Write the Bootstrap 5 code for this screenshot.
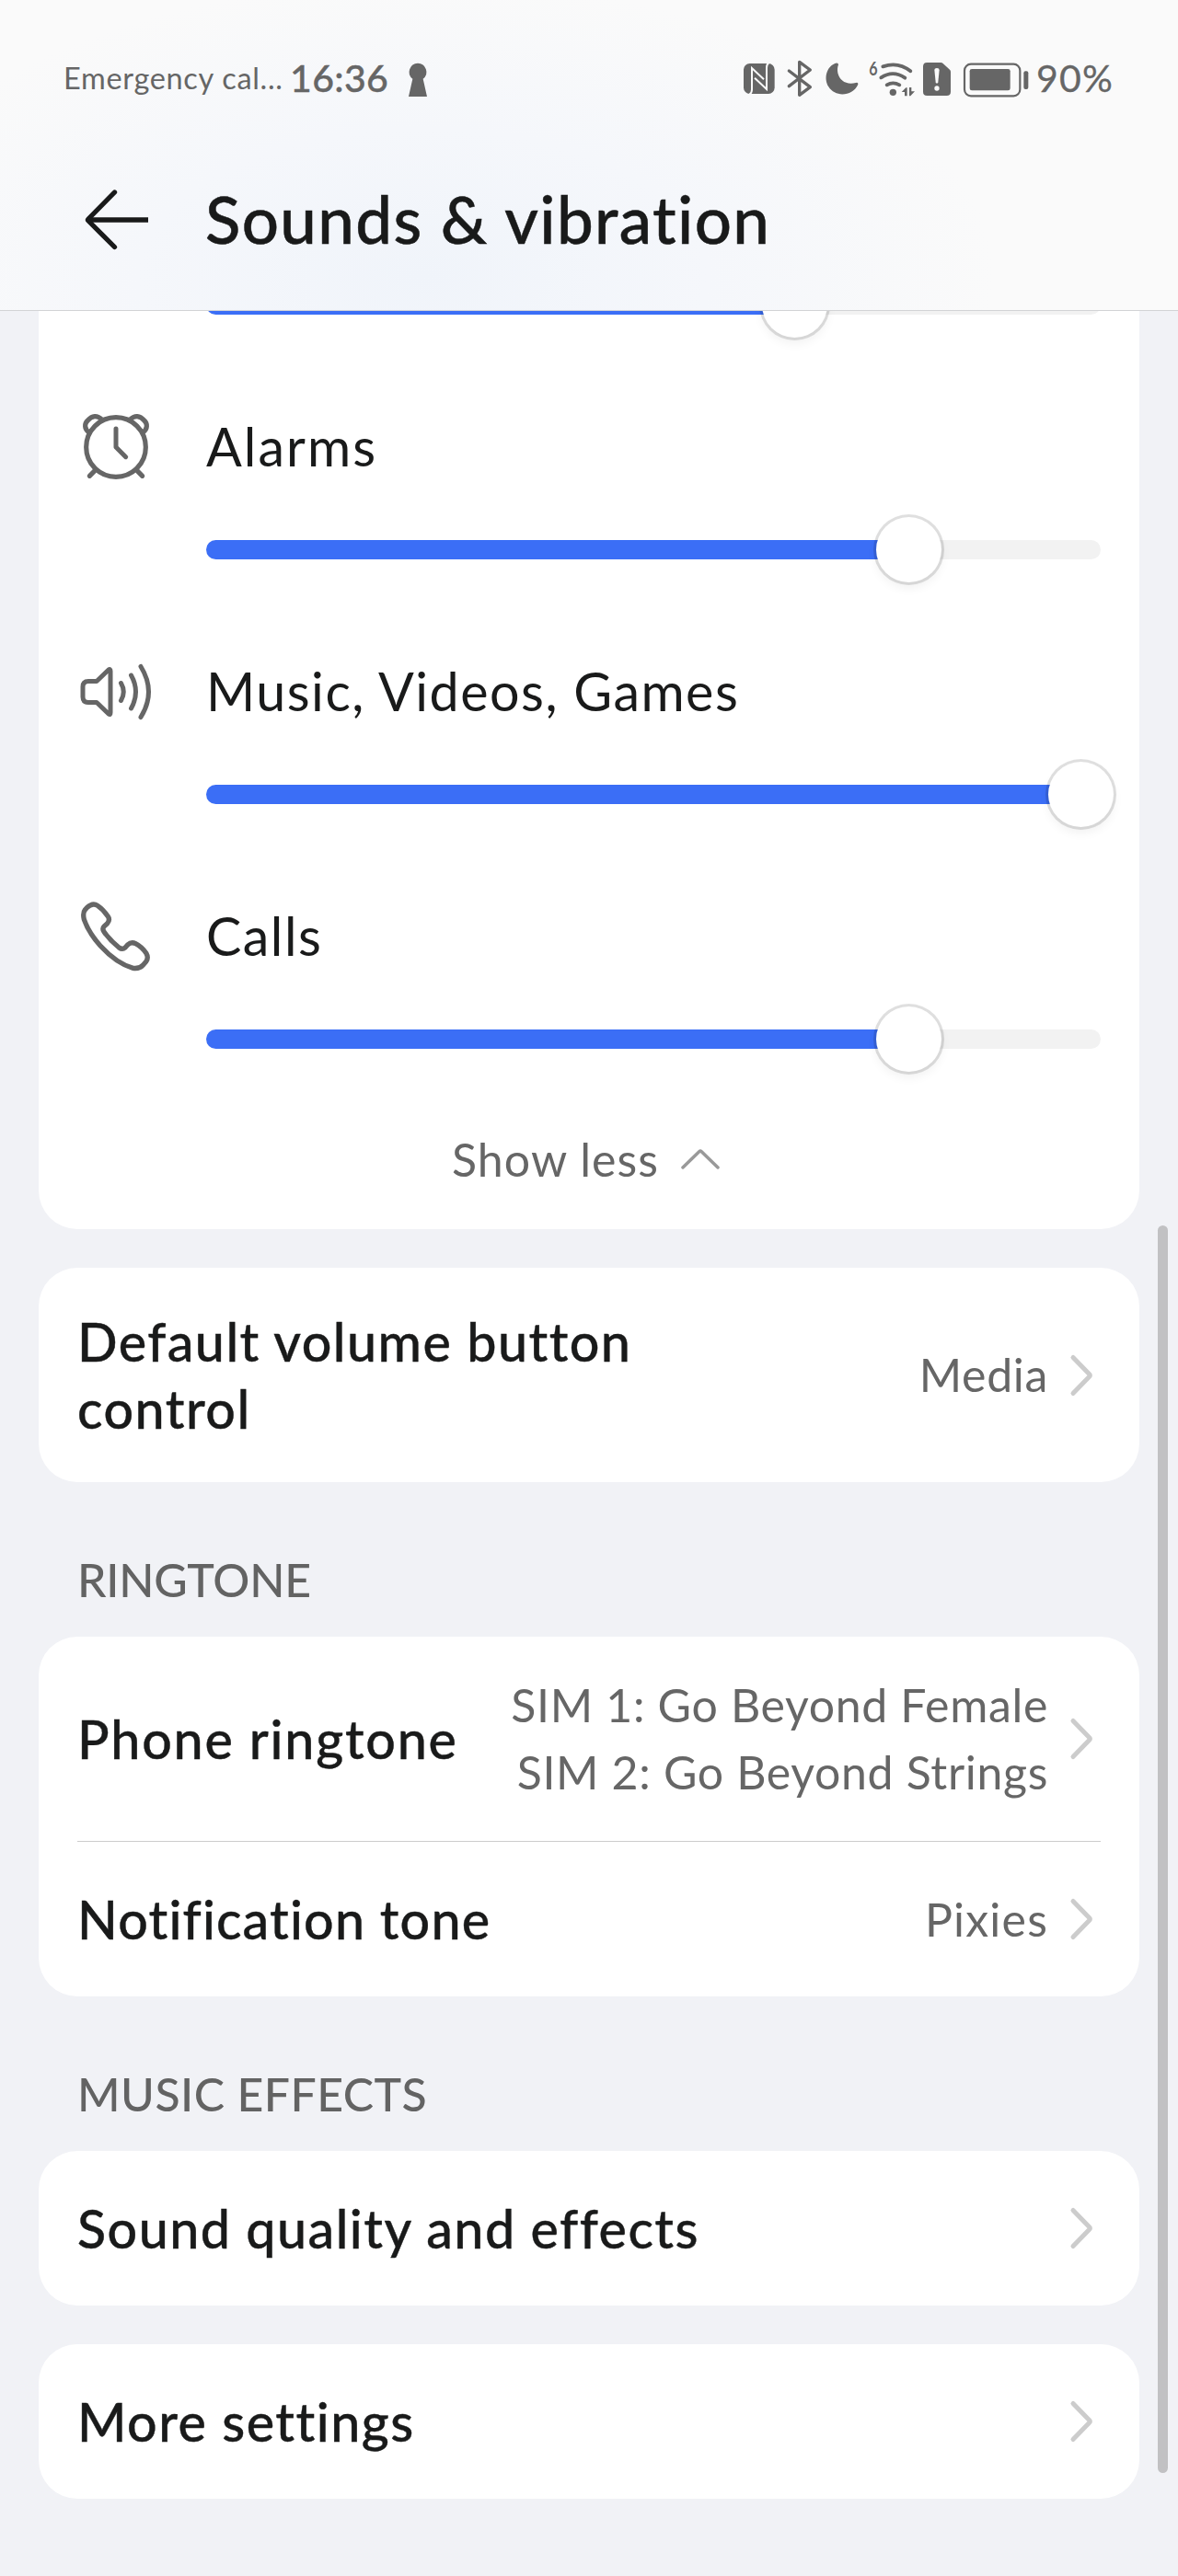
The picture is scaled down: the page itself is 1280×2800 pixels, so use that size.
<!DOCTYPE html>
<html lang="en">
<head>
<meta charset="utf-8">
<meta name="viewport" content="width=device-width, initial-scale=1">
<title>Sounds &amp; vibration</title>
<link href="https://cdn.jsdelivr.net/npm/bootstrap@5.3.0/dist/css/bootstrap.min.css" rel="stylesheet">
<style>
  :root { --ink:#191a1a; --soft:#666; --accent:#3b6ef6; --page:#f1f2f6; }
  body { width:1280px; height:2800px; overflow:hidden; background:var(--page); color:var(--ink);
         font-family:Lato,"Noto Sans",sans-serif; }
  svg { display:block; flex:none; overflow:visible; }
  .app-head { z-index:2; height:338px; padding-top:60px; border-bottom:1px solid #d2d3d5;
    background:radial-gradient(ellipse 620px 320px at 460px 300px,#f0f4fa 0,#f5f7fb 50%,rgba(247,248,251,0) 100%),#fafafa; }
  .status { height:50px; padding-left:69px; color:var(--soft); }
  .status svg { height:50px; }
  .keyhole { margin-right:344px; }
  .carrier { width:246px; font-size:32.5px; letter-spacing:.68px; }
  .clock { width:129px; font-size:41px; font-weight:500; letter-spacing:.35px; -webkit-text-stroke:.4px var(--soft); }
  .charge { font-size:41px; letter-spacing:1.24px; padding-left:2px; -webkit-text-stroke:.3px var(--soft); }
  .head-row { height:90px; margin-top:83px; padding-left:90px; }
  .head-title { font-size:70.8px; line-height:90px; font-weight:500; letter-spacing:1.36px; margin:0 0 0 58px;
    -webkit-text-stroke:.5px var(--ink); }
  .panel { margin:0 42px; border:0; border-radius:42px; background:#fff; --bs-card-border-radius:42px; }
  .panel-gap { margin-top:42px; }
  .volumes { margin-top:-17px; padding:0 42px 40px; border-top-left-radius:0; border-top-right-radius:0; }
  .vol { padding-top:107px; }
  .vol-name { height:72px; font-size:57.4px; line-height:72px; letter-spacing:1.5px; margin-bottom:66px; }
  .vol-name svg { width:84px; height:72px; margin-right:56px; }
  .ls-alarms { letter-spacing:2.05px; }
  .vol-track { margin-left:140px; width:972px; height:21px; }
  .vol-track .progress { height:21px; border-radius:11px; background:#f2f2f2; }
  .vol-track .progress-bar { background:var(--accent); }
  .thumb { position:absolute; top:50%; width:71px; height:71px; margin:-35.5px 0 0 -35.5px; border-radius:50%; background:#fff;
    box-shadow:0 0 0 3px rgba(0,0,0,.12),0 6px 12px rgba(0,0,0,.06); }
  .less { height:72px; margin-top:84px; padding-left:407px; font-size:50px; line-height:72px; letter-spacing:1.1px; color:var(--soft); }
  .item { padding:0 51px 0 42px; min-height:168px; }
  .item-tall { height:233px; }
  .item-double { height:222px; }
  .item-name { font-size:57.4px; line-height:73px; font-weight:500; letter-spacing:1.45px; padding-bottom:2px;
    -webkit-text-stroke:.4px var(--ink); }
  .ls-wide { letter-spacing:1.75px; }
  .ls-tight { letter-spacing:1.15px; }
  .item-value { font-size:50px; line-height:73px; letter-spacing:.66px; color:var(--soft); text-align:right; margin-right:24px; }
  .ls-pixies { letter-spacing:1.2px; }
  .rule { height:1px; margin:0 42px; background:#ccc; }
  .group { height:168px; padding:70px 0 0 84px; font-size:50px; line-height:73px; font-weight:500; letter-spacing:-.25px; color:#636363; }
  .group-loose { letter-spacing:.45px; }
  .scroll-pill { position:absolute; z-index:3; left:1258px; top:1332px; width:11px; height:1356px; border-radius:6px; background:#c1c1c3; }
</style>
</head>
<body class="position-relative">

<header class="app-head position-relative">
  <div class="status d-flex align-items-center text-nowrap">
    <span class="carrier">Emergency cal...</span>
    <span class="clock">16:36</span>
    <svg class="keyhole" width="20" viewBox="1212 60 60 150" fill="#666"><path d="M1242 86a28.500 28.500 0 0 1 17 51L1272 195H1212L1225 137A28.500 28.500 0 0 1 1242 86Z"/></svg>
    <!-- NFC -->
    <svg width="44" viewBox="84 60 132 150"><rect x="84" y="87" width="101" height="99" rx="20" fill="#666"/><g fill="none" stroke="#fafafa" stroke-width="6"><path d="M103 188Q111 184 111 172V102L150 139"/><path d="M166 85Q159 89 159 101V171L120 134"/></g></svg>
    <!-- Bluetooth -->
    <svg width="42" viewBox="216 60 126 150" fill="none" stroke="#666" stroke-width="10" stroke-linejoin="round" stroke-linecap="round"><path d="M232 111 301 164 266 190V82L301 108 232 161"/></svg>
    <!-- Do not disturb -->
    <svg width="48" viewBox="342 60 144 150" fill="#666"><path d="M384 86C354 96 344 136 361 163C383 199 440 194 457 155Q458 148 450 150C420 158 397 144 391 118C389 107 390 99 393 91Q393 84 384 86Z"/></svg>
    <!-- Wi-Fi 6 -->
    <svg width="58" viewBox="486 60 174 150"><g fill="none" stroke="#666" stroke-width="11.500" stroke-linecap="round"><path d="M538 97Q588 80 628 112"/><path d="M532 133Q571 107 610 134"/><path d="M551 157Q571 145 592 157"/></g><circle cx="571" cy="181" r="11" fill="#666"/><text transform="translate(493 125) scale(.78 1)" font-size="62" font-weight="700" fill="#666">6</text><path fill="#666" d="M599 180 613 166H617V193H609V180ZM624 165H631V178H642L628 193H624Z"/></svg>
    <!-- SIM alert -->
    <svg width="40" viewBox="660 60 120 150"><path fill="#666" d="M682 84H727Q731 84 734 87L756 107Q759 110 759 114V179Q759 192 746 192H682Q669 192 669 179V97Q669 84 682 84Z"/><path fill="#fafafa" d="M706 108Q706 102 714 102T722 108L718 148Q717 152 714 152T710 148Z"/><circle cx="714" cy="168" r="8" fill="#fafafa"/></svg>
    <!-- Battery -->
    <svg width="84" viewBox="780 60 252 150" fill="#666"><rect x="804" y="89" width="181" height="104" rx="21" fill="none" stroke="#666" stroke-width="6.500"/><rect x="821" y="105" width="132" height="70" rx="7"/><rect x="997" y="112" width="15" height="59" rx="6"/></svg>
    <span class="charge">90%</span>
  </div>
  <div class="head-row d-flex align-items-center">
    <svg width="75" height="90" viewBox="90 193 75 90" fill="none" stroke="#191a1a" stroke-width="5.300" stroke-linejoin="round"><path stroke-linecap="round" d="M124.500 209 96 238Q95 239 96 240L124.500 268.500"/><path d="M97 239H161"/></svg>
    <h1 class="head-title">Sounds &amp; vibration</h1>
  </div>
</header>

<main>
  <section class="card panel volumes">
    <div class="vol-track position-relative">
      <div class="progress"><div class="progress-bar" style="width:65.8%"></div></div>
      <span class="thumb" style="left:65.8%"></span>
    </div>

    <div class="vol">
      <div class="vol-name d-flex align-items-center">
        <svg viewBox="72 87 252 216" fill="none" stroke="#666" stroke-width="15.500"><circle cx="198" cy="198" r="97"/><path stroke-linejoin="round" d="M110 150C94 138 95 121 106 111C120 94 137 94 151 107M286 150C302 138 301 121 290 111C276 94 259 94 245 107"/><path stroke-linecap="round" stroke-linejoin="round" stroke-width="15" d="M198 138V198L230 230"/><path stroke-linecap="round" d="M129 275 112 292M267 275 284 292"/></svg>
        <span class="ls-alarms">Alarms</span>
      </div>
      <div class="vol-track position-relative">
        <div class="progress"><div class="progress-bar" style="width:78.6%"></div></div>
        <span class="thumb" style="left:78.6%"></span>
      </div>
    </div>

    <div class="vol">
      <div class="vol-name d-flex align-items-center">
        <svg viewBox="84 715 84 72" fill="none" stroke="#666" stroke-width="5" stroke-linecap="round" stroke-linejoin="round"><path d="M105 740.500 118 728Q120 726.500 120 729.500V774.500Q120 777.500 118 776L105 763.500H96Q90 763.500 90 757.500V746.500Q90 740.500 96 740.500Z"/><path d="M131.500 742.500Q137 752 131.500 761.500M142.500 734Q152.500 752 142.500 770M153 724.500Q170 752 153 779.500"/></svg>
        <span>Music, Videos, Games</span>
      </div>
      <div class="vol-track position-relative">
        <div class="progress"><div class="progress-bar" style="width:97.8%"></div></div>
        <span class="thumb" style="left:97.8%"></span>
      </div>
    </div>

    <div class="vol">
      <div class="vol-name d-flex align-items-center">
        <svg viewBox="72 63 252 216" fill="none" stroke="#666" stroke-width="16" stroke-linejoin="round"><path d="M103 80Q122 62 138 73Q156 85 171 107Q180 119 170 131L160 140Q152 148 159 158Q178 186 208 210Q219 218 228 210L236 201Q248 190 262 197Q282 207 297 229Q305 243 296 256L287 266Q275 280 254 277Q200 262 147 204Q108 160 94 118Q89 97 97 87Z"/></svg>
        <span>Calls</span>
      </div>
      <div class="vol-track position-relative">
        <div class="progress"><div class="progress-bar" style="width:78.6%"></div></div>
        <span class="thumb" style="left:78.6%"></span>
      </div>
    </div>

    <div class="less d-flex align-items-center">
      <span>Show less</span>
      <svg class="ms-4" width="42" height="22" viewBox="0 0 42 22" fill="none" stroke="#999" stroke-width="3.500" stroke-linecap="round" stroke-linejoin="round"><path d="M2 20 20 2.500Q21 1.500 22 2.500L40 20"/></svg>
    </div>
  </section>

  <section class="card panel panel-gap">
    <div class="item item-tall d-flex align-items-center">
      <div class="item-name">Default volume button<br>control</div>
      <div class="item-value ms-auto">Media</div>
      <svg width="24" height="46" viewBox="0 0 24 46" fill="none" stroke="#ccc" stroke-width="5" stroke-linecap="round" stroke-linejoin="round"><path d="M3 3.500 20.500 21.500Q22 23 20.500 24.500L3 42.500"/></svg>
    </div>
  </section>

  <div class="group">RINGTONE</div>
  <section class="card panel">
    <div class="item item-double d-flex align-items-center">
      <div class="item-name ls-wide">Phone ringtone</div>
      <div class="item-value ms-auto">SIM 1: Go Beyond Female<br>SIM 2: Go Beyond Strings</div>
      <svg width="24" height="46" viewBox="0 0 24 46" fill="none" stroke="#ccc" stroke-width="5" stroke-linecap="round" stroke-linejoin="round"><path d="M3 3.500 20.500 21.500Q22 23 20.500 24.500L3 42.500"/></svg>
    </div>
    <div class="rule"></div>
    <div class="item d-flex align-items-center">
      <div class="item-name ls-tight">Notification tone</div>
      <div class="item-value ls-pixies ms-auto">Pixies</div>
      <svg width="24" height="46" viewBox="0 0 24 46" fill="none" stroke="#ccc" stroke-width="5" stroke-linecap="round" stroke-linejoin="round"><path d="M3 3.500 20.500 21.500Q22 23 20.500 24.500L3 42.500"/></svg>
    </div>
  </section>

  <div class="group group-loose">MUSIC EFFECTS</div>
  <section class="card panel">
    <div class="item d-flex align-items-center">
      <div class="item-name">Sound quality and effects</div>
      <svg class="ms-auto" width="24" height="46" viewBox="0 0 24 46" fill="none" stroke="#ccc" stroke-width="5" stroke-linecap="round" stroke-linejoin="round"><path d="M3 3.500 20.500 21.500Q22 23 20.500 24.500L3 42.500"/></svg>
    </div>
  </section>
  <section class="card panel panel-gap">
    <div class="item d-flex align-items-center">
      <div class="item-name">More settings</div>
      <svg class="ms-auto" width="24" height="46" viewBox="0 0 24 46" fill="none" stroke="#ccc" stroke-width="5" stroke-linecap="round" stroke-linejoin="round"><path d="M3 3.500 20.500 21.500Q22 23 20.500 24.500L3 42.500"/></svg>
    </div>
  </section>
</main>

<div class="scroll-pill"></div>
<script src="https://cdn.jsdelivr.net/npm/bootstrap@5.3.0/dist/js/bootstrap.bundle.min.js"></script>
</body>
</html>
